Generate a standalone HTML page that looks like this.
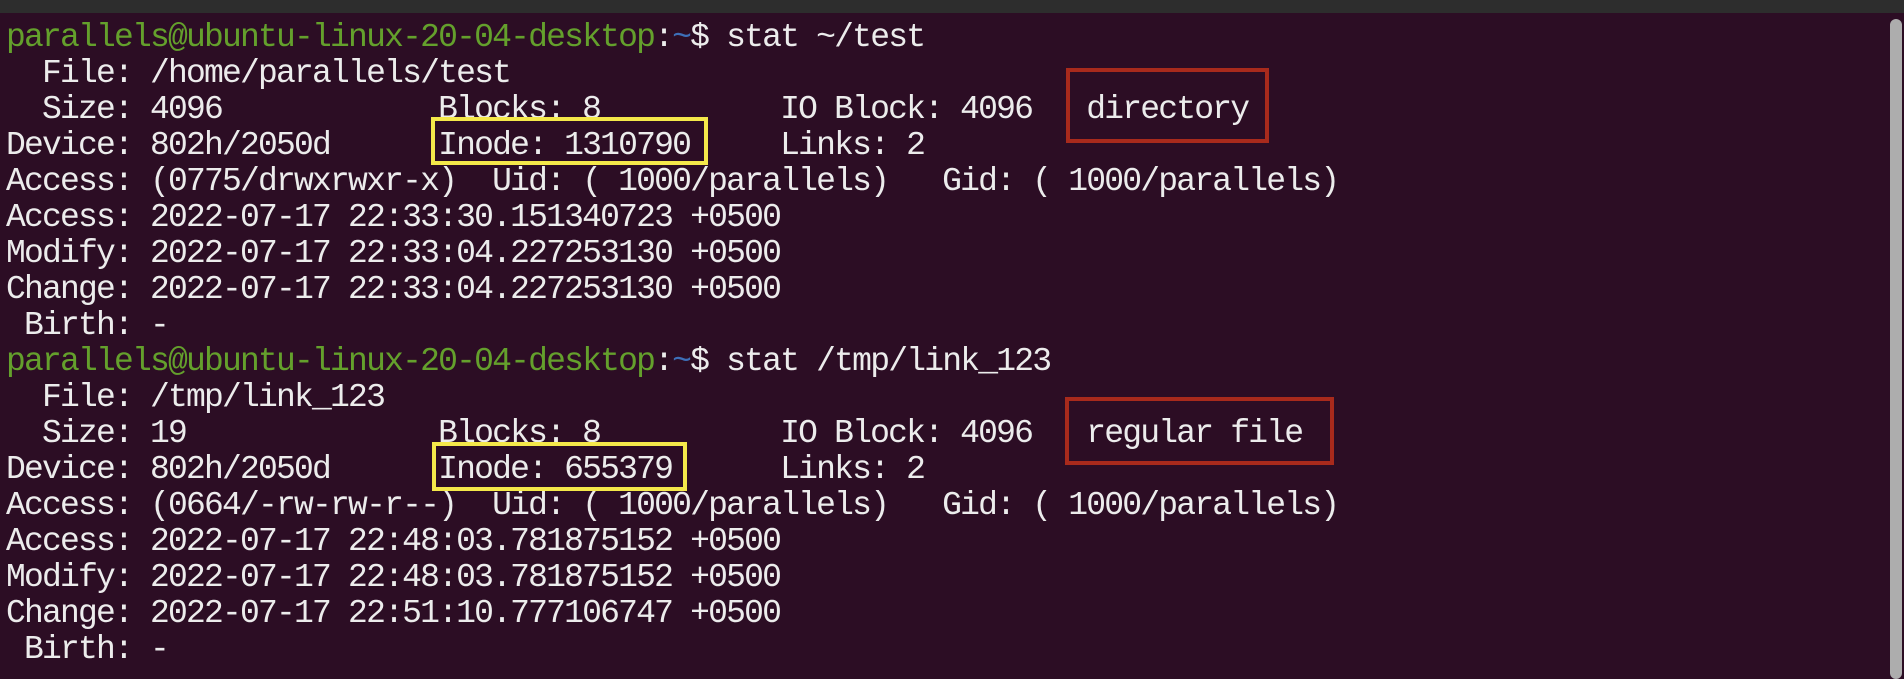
<!DOCTYPE html>
<html><head><meta charset="utf-8"><style>
html,body{margin:0;padding:0;}
body{width:1904px;height:668px;overflow:hidden;background:#2c0d24;position:relative;}
.top{position:absolute;left:0;top:0;width:1904px;height:13px;background:#2d2d2d;}
pre{position:absolute;left:6px;top:20px;margin:0;font-family:"Liberation Mono","DejaVu Sans Mono",monospace;font-size:33px;letter-spacing:-1.8px;line-height:36px;color:#ececec;white-space:pre;}
.g{color:#64a02c;}
.b{color:#3d6fb8;}
.box{position:absolute;box-sizing:border-box;border:4px solid;}
.y{border-color:#f4e84a;}
.r{border-color:#a82a1c;}
.sb{position:absolute;left:1890px;top:19px;width:12px;height:660px;background:#adadad;border-radius:6px;}
</style></head><body>
<div class="top"></div>
<pre><span class="g">parallels@ubuntu-linux-20-04-desktop</span>:<span class="b">~</span>$ stat ~/test
  File: /home/parallels/test
  Size: 4096            Blocks: 8          IO Block: 4096   directory
Device: 802h/2050d      Inode: 1310790     Links: 2
Access: (0775/drwxrwxr-x)  Uid: ( 1000/parallels)   Gid: ( 1000/parallels)
Access: 2022-07-17 22:33:30.151340723 +0500
Modify: 2022-07-17 22:33:04.227253130 +0500
Change: 2022-07-17 22:33:04.227253130 +0500
 Birth: -
<span class="g">parallels@ubuntu-linux-20-04-desktop</span>:<span class="b">~</span>$ stat /tmp/link_123
  File: /tmp/link_123
  Size: 19              Blocks: 8          IO Block: 4096   regular file
Device: 802h/2050d      Inode: 655379      Links: 2
Access: (0664/-rw-rw-r--)  Uid: ( 1000/parallels)   Gid: ( 1000/parallels)
Access: 2022-07-17 22:48:03.781875152 +0500
Modify: 2022-07-17 22:48:03.781875152 +0500
Change: 2022-07-17 22:51:10.777106747 +0500
 Birth: -</pre>
<div class="box y" style="left:431px;top:117px;width:277px;height:48px;"></div>
<div class="box r" style="left:1066px;top:68px;width:203px;height:75px;"></div>
<div class="box y" style="left:432px;top:442px;width:255px;height:49px;"></div>
<div class="box r" style="left:1065px;top:397px;width:269px;height:68px;"></div>
<div class="sb"></div>
</body></html>
